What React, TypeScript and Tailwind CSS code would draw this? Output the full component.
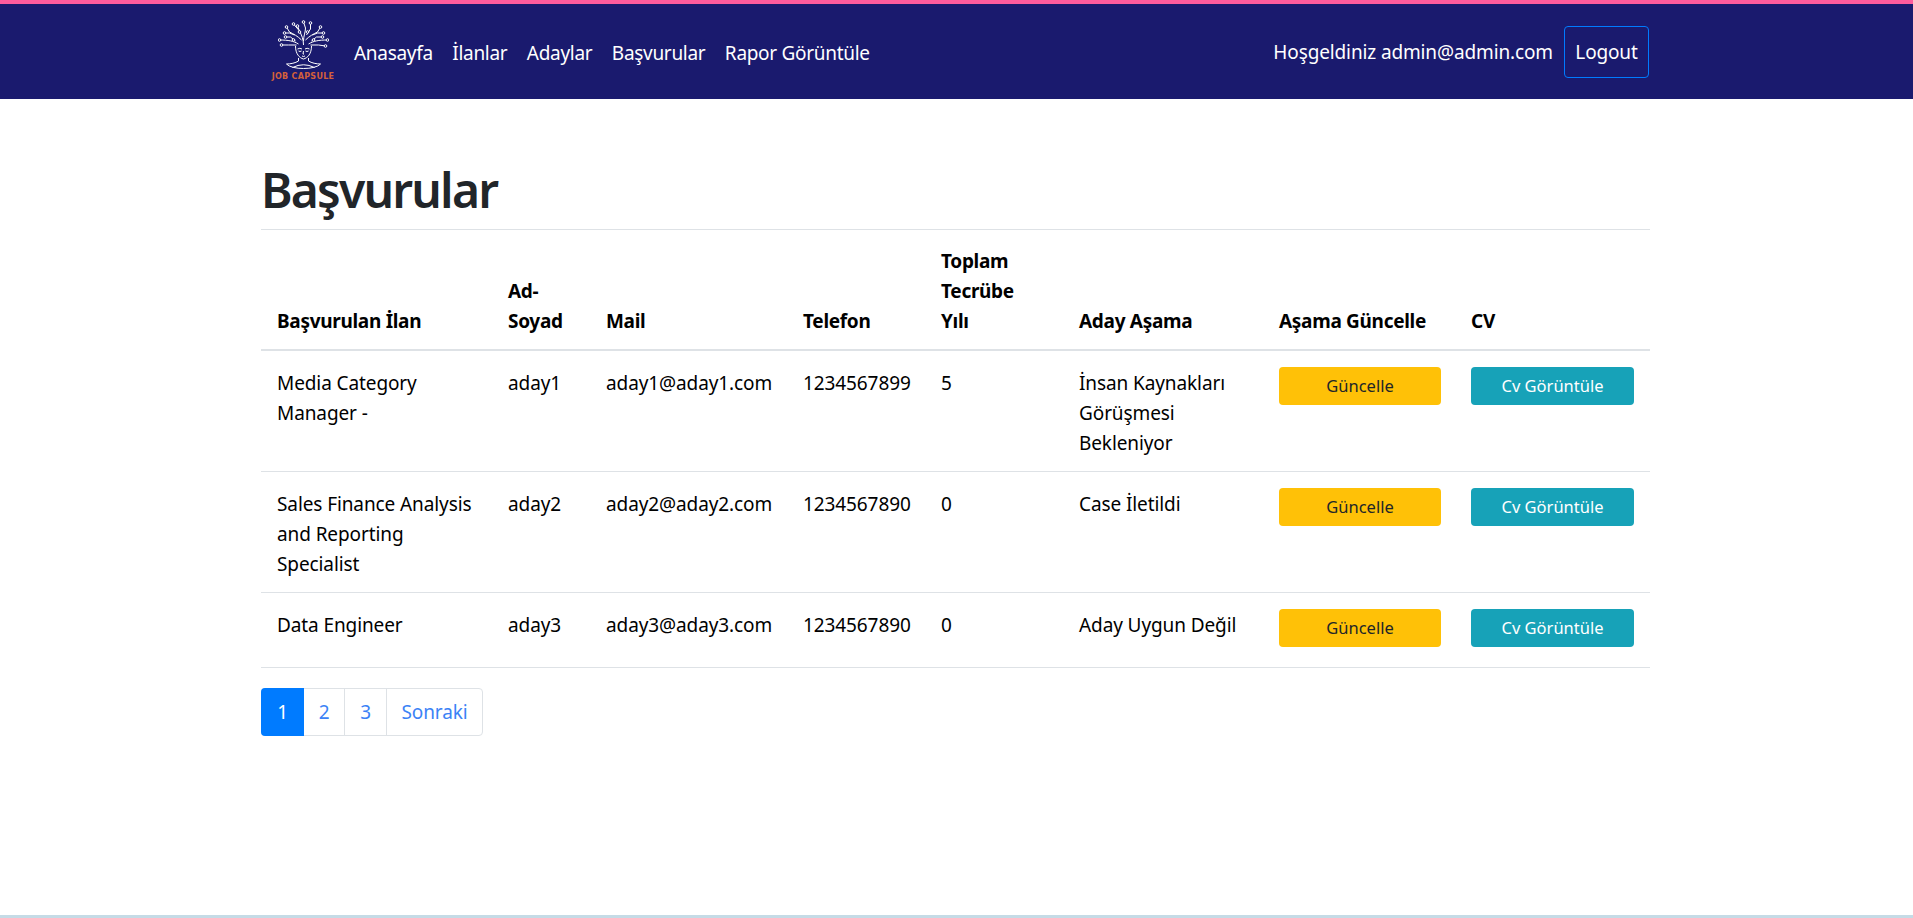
const rows = [
  {
    ilan: "Media Category Manager -",
    ad: "aday1",
    mail: "aday1@aday1.com",
    tel: "1234567899",
    yil: "5",
    asama: "İnsan Kaynakları Görüşmesi Bekleniyor",
    last: false,
  },
  {
    ilan: "Sales Finance Analysis and Reporting Specialist",
    ad: "aday2",
    mail: "aday2@aday2.com",
    tel: "1234567890",
    yil: "0",
    asama: "Case İletildi",
    last: false,
  },
  {
    ilan: "Data Engineer",
    ad: "aday3",
    mail: "aday3@aday3.com",
    tel: "1234567890",
    yil: "0",
    asama: "Aday Uygun Değil",
    last: true,
  },
];

const branches = [
  "M50 50 C50 38 46 30 42 22 L38 12",
  "M50 42 C50 32 54 24 54 16 L50 4",
  "M42 22 L30 8",
  "M56 30 L64 18 L64 6",
  "M46 40 C38 32 30 28 22 24 L16 14",
  "M54 40 C62 32 70 28 78 24 L84 14",
  "M32 30 L22 26 L12 26",
  "M68 30 L78 26 L90 26",
  "M40 48 C30 42 20 40 2 40",
  "M60 48 C70 42 80 40 98 40",
  "M34 42 L24 34 L14 34",
  "M66 42 L76 34 L88 34",
  "M36 50 L20 50 L6 50",
  "M64 50 L80 50 L94 52",
];

const nodes = [
  [38, 12], [50, 4], [30, 8], [64, 6], [16, 14], [84, 14], [12, 26], [90, 26],
  [2, 40], [98, 40], [14, 34], [88, 34], [6, 50], [94, 52], [42, 24], [58, 24], [30, 40], [70, 40],
];

function Logo() {
  return (
    <div className="flex w-[66px] flex-col items-center">
      <svg viewBox="0 0 100 100" className="h-[50px] w-[51px]" fill="none" stroke="#fff" strokeWidth="2">
        {branches.map((d) => (
          <path key={d} d={d} />
        ))}
        {nodes.map(([cx, cy]) => (
          <circle key={`${cx}-${cy}`} cx={cx} cy={cy} r="2.6" fill="#1a1a6e" />
        ))}
        {/* face */}
        <path d="M34 52 C34 68 42 76 50 78 C58 76 66 68 66 52" />
        <path d="M38 58 Q43 55 47 58 M53 58 Q57 55 62 58" />
        <path d="M40 62 Q43 64 46 62 M54 62 Q57 64 60 62" />
        <path d="M50 62 L49 68 L51 68 M47 72 Q50 74 53 72" />
        <path d="M40 76 L40 82 C34 86 24 88 16 88 C26 100 74 100 84 88 C76 88 66 86 60 82 L60 76" />
        <path d="M28 95 Q50 84 72 95" />
      </svg>
      <span className="mt-[2px] text-[8px] leading-[9px] font-bold tracking-[0.3px] whitespace-nowrap text-[#d4603a] font-['DejaVu_Sans',sans-serif]">
        JOB CAPSULE
      </span>
    </div>
  );
}

export default function App() {
  return (
    <div className="flex min-h-[918px] flex-col bg-white font-['Noto_Sans',sans-serif] text-[19px] text-[#212529]">
      <nav className="h-[99px] border-t-[4px] border-[#ff5c9d] bg-[#1a1a6e]">
        <div className="ml-[261px] flex h-full w-[1389px] items-center">
          <div className="ml-[9px] mr-[18px] mt-[-2px]">
            <Logo />
          </div>
          <ul className="mt-[3px] flex gap-[19.5px] tracking-[-0.3px] text-white">
            <li>Anasayfa</li>
            <li>İlanlar</li>
            <li>Adaylar</li>
            <li>Başvurular</li>
            <li>Rapor Görüntüle</li>
          </ul>
          <span className="mt-[2px] ml-auto mr-[11px] tracking-[-0.13px] text-white">Hoşgeldiniz admin@admin.com</span>
          <button className="mr-px h-[52px] w-[85px] rounded-[4px] border border-[#007bff] pt-[2px] tracking-[-0.15px] text-white">
            Logout
          </button>
        </div>
      </nav>

      <main className="ml-[261px] w-[1389px] flex-1">
        <h1 className="mt-[61px] h-[69px] text-[48px] leading-[60px] font-semibold tracking-[-1.8px] text-[#212529]">
          Başvurular
        </h1>
        <table className="w-full table-fixed border-collapse leading-[30px] tracking-[-0.1px] text-black">
          <thead>
            <tr className="border-t border-b-2 border-t-[#dee2e6] border-b-[#dee2e6] text-left align-bottom">
              <th className="w-[231px] px-[16px] pt-[16px] pb-[13px] font-bold tracking-[-0.3px]">Başvurulan İlan</th>
              <th className="w-[98px] px-[16px] pt-[16px] pb-[13px] font-bold tracking-[-0.3px]">Ad-Soyad</th>
              <th className="w-[197px] px-[16px] pt-[16px] pb-[13px] font-bold tracking-[-0.3px]">Mail</th>
              <th className="w-[138px] px-[16px] pt-[16px] pb-[13px] font-bold tracking-[-0.3px]">Telefon</th>
              <th className="w-[138px] pt-[16px] pr-[30px] pb-[13px] pl-[16px] font-bold tracking-[-0.3px]">Toplam Tecrübe Yılı</th>
              <th className="w-[200px] px-[16px] pt-[16px] pb-[13px] font-bold tracking-[-0.3px]">Aday Aşama</th>
              <th className="w-[192px] px-[16px] pt-[16px] pb-[13px] font-bold tracking-[-0.3px]">Aşama Güncelle</th>
              <th className="px-[16px] pt-[16px] pb-[13px] font-bold tracking-[-0.3px]">CV</th>
            </tr>
          </thead>
          <tbody>
            {rows.map((row) => (
              <tr key={row.ad} className="border-b border-[#dee2e6] align-top">
                <td className="px-[16px] pt-[17px] pb-[13px]">{row.ilan}</td>
                <td className="px-[16px] pt-[17px]">{row.ad}</td>
                <td className="px-[16px] pt-[17px]">{row.mail}</td>
                <td className="px-[16px] pt-[17px]">{row.tel}</td>
                <td className="px-[16px] pt-[17px]">{row.yil}</td>
                <td className="px-[16px] pt-[17px] pb-[13px]">{row.asama}</td>
                <td className={row.last ? "pt-[16px] pr-[14px] pb-[20px] pl-[16px]" : "pt-[16px] pr-[14px] pb-[13px] pl-[16px]"}>
                  <button className="block h-[38px] w-full rounded-[4px] bg-[#ffc107] text-[16.5px] tracking-normal text-[#212529]">
                    Güncelle
                  </button>
                </td>
                <td className={row.last ? "px-[16px] pt-[16px] pb-[20px]" : "px-[16px] pt-[16px] pb-[13px]"}>
                  <button className="block h-[38px] w-full rounded-[4px] bg-[#17a2b8] text-[16.5px] tracking-normal text-white">
                    Cv Görüntüle
                  </button>
                </td>
              </tr>
            ))}
          </tbody>
        </table>

        <div className="mt-[20px] flex h-[48px] w-fit rounded-[4px] border border-[#dee2e6] tracking-[-0.15px] text-[#3b82f6]">
          <span className="-my-px -ml-px flex w-[43px] items-center justify-center rounded-l-[4px] bg-[#007bff] text-white">1</span>
          <span className="flex w-[41px] items-center justify-center border-r border-[#dee2e6]">2</span>
          <span className="flex w-[42px] items-center justify-center border-r border-[#dee2e6]">3</span>
          <span className="flex w-[95px] items-center justify-center">Sonraki</span>
        </div>
      </main>

      <footer className="h-[3px] bg-[#c5dbe6]" />
    </div>
  );
}
